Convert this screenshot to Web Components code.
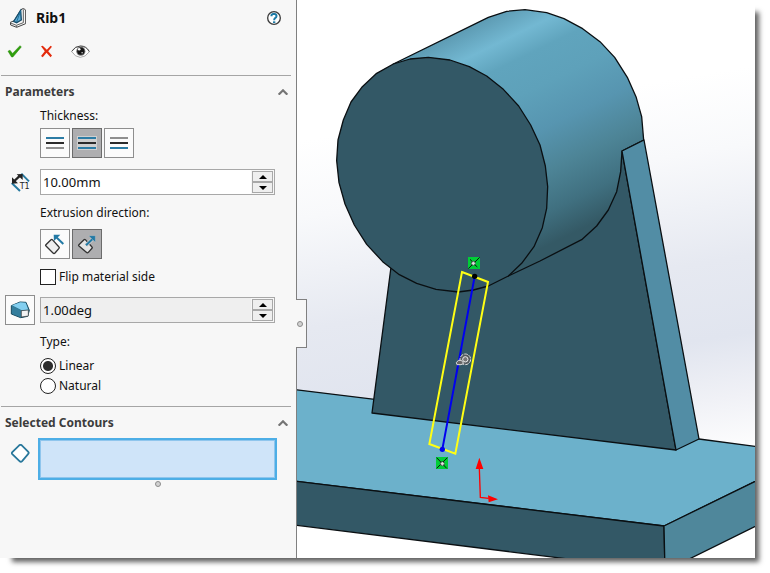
<!DOCTYPE html>
<html lang="en">
<head>
<meta charset="utf-8">
<title>Rib1</title>
<style>
html,body{margin:0;height:100%;background:#fff}
body{font:12px/16px "Noto Sans","Open Sans",sans-serif;color:#111}
</style>
</head>
<body>
<app-window>
  <property-panel slot="panel" name="Rib1">
    <panel-section heading="Parameters" inset="1">
      <panel-row space="4"><span>Thickness:</span></panel-row>
      <panel-row space="11">
        <icon-toggle label="First side" icon="first"></icon-toggle>
        <icon-toggle label="Both sides" icon="both" pressed></icon-toggle>
        <icon-toggle label="Second side" icon="second"></icon-toggle>
      </panel-row>
      <panel-row space="10">
        <svg-icon slot="lead" name="dimension"></svg-icon>
        <spin-field label="Rib thickness" value="10.00mm"></spin-field>
      </panel-row>
      <panel-row space="8"><span>Extrusion direction:</span></panel-row>
      <panel-row space="10">
        <icon-toggle label="Parallel to sketch" icon="parallel"></icon-toggle>
        <icon-toggle label="Normal to sketch" icon="normal" pressed></icon-toggle>
      </panel-row>
      <panel-row space="10"><choice-group kind="checkbox" options="Flip material side"></choice-group></panel-row>
      <panel-row space="9">
        <icon-toggle slot="lead" label="Draft on/off" icon="draft"></icon-toggle>
        <spin-field label="Draft angle" value="1.00deg" muted></spin-field>
      </panel-row>
      <panel-row space="8"><span>Type:</span></panel-row>
      <panel-row space="12"><choice-group kind="radio" options="Linear,Natural" selected="Linear"></choice-group></panel-row>
    </panel-section>
    <panel-section heading="Selected Contours" inset="0">
      <contour-list></contour-list>
    </panel-section>
  </property-panel>
  <model-view slot="view"></model-view>
</app-window>

<script>
const icons = {
  rib: ['30 25 48 60', 16, 20, '<path d="M62 31l8-5 7 5v41L50 83 32 76l-1-8 12-5 19-32z" fill="#f6f6f6" stroke="#444" stroke-width="3"/><path d="M70 29v40l-21 8-17-7M50 78v4" fill="none" stroke="#444" stroke-width="2.5"/><path d="M62 32L41 65l9 4 14-8z" fill="#5fadd6" stroke="#174f6d" stroke-width="4"/><path d="M62 34L50 66" stroke="#1c6f99" stroke-width="3"/>'],
  ok: ['20 134 44 40', 15, 13, '<path d="M22 153l6-3 8 10 23-24 4 4-26 31h-4z" fill="#2fa00c" stroke="#268508" stroke-width="1.5"/>'],
  cancel: ['124 136 38 38', 13, 13, '<path d="M127 140l5-2 12 12 11-12 4 3-11 13 11 13-4 5-12-13-11 13-5-4 11-14z" fill="#e32b0c"/>'],
  eye: ['212 130 58 46', 19, 15, '<path d="M214 153q11-16 27-16 18 0 27 17-12 17-28 17-16-1-26-18z" fill="#fff" stroke="#aaa" stroke-width="3"/><path d="M214 152q11-16 27-16 18 0 27 17" fill="none" stroke="#444" stroke-width="3"/><circle cx="242" cy="152" r="14" fill="#777"/><circle cx="242" cy="152" r="11" fill="#151515"/><circle cx="237" cy="146" r="4" fill="#fff"/><circle cx="246" cy="157" r="2.5" fill="#ccc"/>'],
  help: ['0 0 42 42', 14, 14, '<circle cx="21" cy="21" r="19" fill="#fff" stroke="#3c3c3c" stroke-width="4"/><path d="M13.500 16v-4q2-4 8-4 7 1 7 7 0 4-4 6-3 2-3 7" fill="none" stroke="#1e7ba6" stroke-width="6"/><path d="M18 31h7v5h-7z" fill="#1e7ba6"/>'],
  chevron: ['0 0 30 18', 10, 6, '<path d="M2 17L15 4l13 13" fill="none" stroke="#757575" stroke-width="6.5"/>'],
  first: ['0 0 18 14', 18, 14, '<path d="M0 1h18v2H0z" fill="#2c7ca5"/><path d="M0 6h18v2H0z" fill="#2b2b2b"/><path d="M0 11h18v2H0z" fill="#8f8f8f"/>'],
  both: ['-1 0 20 14', 20, 14, '<path d="M-1 0h20v14H-1z" fill="#cfcfcf"/><path d="M0 1h18v2H0zM0 11h18v2H0z" fill="#2c7ca5"/><path d="M0 6h18v2H0z" fill="#2b2b2b"/>'],
  second: ['0 0 18 14', 18, 14, '<path d="M0 1h18v2H0z" fill="#8f8f8f"/><path d="M0 6h18v2H0z" fill="#2b2b2b"/><path d="M0 11h18v2H0z" fill="#2c7ca5"/>'],
  dimension: ['32 213 57 60', 19, 20, '<path d="M63 218l23 23M34 246l25 24" stroke="#27799f" stroke-width="6"/><path d="M42 240l18-17" stroke="#222" stroke-width="7"/><path d="M35 248v-19l18 18zM67 219v18l-18-17z" fill="#222"/><text x="58" y="264" font-family="DejaVu Sans" font-size="24" fill="#222">T1</text>'],
  parallel: ['120 72 90 90', 30, 30, '<path d="M137 120l16-16q2-2 4 0l20 22q2 2 0 4l-12 14q-3 3-6 0l-21-21q-2-2-1-3z" fill="#eee" stroke="#333" stroke-width="4"/><path d="M190 117l-21-20" stroke="#237aa5" stroke-width="6"/><path d="M161 89h20l-19 19z" fill="#237aa5"/>'],
  normal: ['216 72 90 90', 30, 30, '<path d="M236 120l16-16q2-2 4 0l20 22q2 2 0 4l-11 12q-3 3-6 0l-22-19q-2-2-1-3z" fill="#e5e5e5" stroke="#333" stroke-width="4"/><path d="M258 121l20-19" stroke="#ccc" stroke-width="11"/><path d="M258 121l22-21" stroke="#237aa5" stroke-width="6"/><path d="M266 92h20v20z" fill="#237aa5" stroke="#ccc" stroke-width="1"/>'],
  draft: ['15 270 90 90', 30, 30, '<path d="M34 302l26-11 18 1 10 24-5 18-21 4-28-11z" fill="#2b7793" stroke="#194c62" stroke-width="3"/><path d="M36 301l25-9 16 1 8 21-20 2z" fill="#83cff0"/><path d="M36 303l27 13v21l-27-11z" fill="#347e9d"/><path d="M64 317l21-2v18l-21 3z" fill="#f3f3f3" stroke="#333" stroke-width="2"/>'],
  contour: ['32 530 56 58', 19, 19, '<path d="M35 555l21-21q4-3 8 0l19 19q4 4 0 8l-18 21q-4 4-8 0l-22-21q-3-3 0-6z" fill="#fff" stroke="#28779b" stroke-width="5.500"/>']
};
const svg = n => { const [v, w, h, body] = icons[n]; return `<svg viewBox="${v}" width="${w}" height="${h}" aria-hidden="true">${body}</svg>`; };
const base = '*{box-sizing:border-box}svg{display:block;flex:none}button,input,select{font:inherit;color:inherit;margin:0}';
const define = (tag, render) => customElements.define(tag, class extends HTMLElement {
  connectedCallback() {
    if (this.shadowRoot) return;
    this.attachShadow({ mode: 'open' }).innerHTML = `<style>${base}</style>` + render(this);
  }
});

define('svg-icon', e => `<style>:host{display:block}</style>${svg(e.getAttribute('name'))}`);

define('app-window', () => `<style>
:host{display:block;box-sizing:border-box;height:100vh;padding:0 15px 15px 0}
.win{display:flex;height:100%;box-shadow:8px 8px 5px -4px rgba(0,0,0,.62)}
slot[name=view]::slotted(*){flex:1;min-width:0}
</style><main class="win"><slot name="panel"></slot><slot name="view"></slot></main>`);

define('property-panel', e => `<style>
:host{display:block;position:relative;z-index:1;flex:none;box-sizing:border-box;width:297px;background:#f7f7f7;border-right:1px solid #808080}
header{height:75px;padding:8px 15px 0 7px}
.title,.actions{display:flex;align-items:center}
.title{height:20px;gap:10px;padding-left:3px}
h1{flex:1;margin:0;font-size:14px;line-height:20px;font-weight:700}
.actions{height:24px;margin-top:11px;gap:18px}
button{display:block;padding:0;border:0;background:none}
.tab{position:absolute;left:100%;top:299px;width:11px;height:49px;display:grid;place-items:center start;background:#f7f7f7;border:1px solid #808080;border-left:0}
.tab i{width:6px;height:6px;margin-left:1px;border:1px solid #8c8c8c;border-radius:50%;background:#d2d2d2}
</style>
<header><div class="title">${svg('rib')}<h1>${e.getAttribute('name')}</h1><button aria-label="Help">${svg('help')}</button></div>
<div class="actions"><button aria-label="OK">${svg('ok')}</button><button aria-label="Cancel">${svg('cancel')}</button><button aria-label="Preview">${svg('eye')}</button></div></header>
<slot></slot><button class="tab" aria-label="Resize panel"><i></i></button>`);

define('panel-section', e => `<style>
:host{display:block}
.bar{height:32px;margin:0 5px ${e.getAttribute('inset')}px 1px;padding:0 3px 0 4px;border-top:1px solid #a5a5a5;display:flex;align-items:center;justify-content:space-between}
h2{margin:0;font-size:12px;line-height:16px;font-weight:700;color:#3c3c3c}
button{display:block;padding:0;border:0;background:none}
</style><section><div class="bar"><h2>${e.getAttribute('heading')}</h2><button aria-label="Collapse ${e.getAttribute('heading')}" aria-expanded="true">${svg('chevron')}</button></div><slot></slot></section>`);

define('panel-row', e => `<style>
:host{display:grid;grid-template-columns:40px 1fr;align-items:center;padding-right:21px;margin-bottom:${e.getAttribute('space')}px}
.lead{display:flex;justify-content:center}
.body{display:flex;gap:2px;min-height:16px}
</style><div class="lead"><slot name="lead"></slot></div><div class="body"><slot></slot></div>`);

define('icon-toggle', e => `<style>
:host{display:block}
button{width:30px;height:30px;padding:0;display:grid;place-items:center;border:1px solid #8e8e8e;background:#fbfbfb;overflow:hidden}
button[aria-pressed=true]{background:#aeaeb0;border-color:#6b6b6b}
svg{margin:-1px}
</style><button aria-label="${e.getAttribute('label')}" aria-pressed="${e.hasAttribute('pressed')}">${svg(e.getAttribute('icon'))}</button>`);

define('spin-field', e => `<style>
:host{display:block;flex:1}
.box{display:flex;height:26px;border:1px solid #a8a8a8;background:#f7f7f7}
input{flex:1;min-width:0;height:24px;padding:0 2px;border:0;outline:0;font-size:13px;line-height:24px;background:${e.hasAttribute('muted') ? '#efefef' : '#fff'}}
.spin{display:grid;width:21px;margin:1px}
button{padding:0;display:grid;place-items:center;border:1px solid #a8a8a8;background:#efefef}
</style><div class="box"><input type="text" aria-label="${e.getAttribute('label')}" value="${e.getAttribute('value')}">
<div class="spin"><button aria-label="Increase"><svg width="8" height="4" viewBox="0 0 8 4"><path d="M0 4l4-4 4 4z"/></svg></button><button aria-label="Decrease"><svg width="8" height="4" viewBox="0 0 8 4"><path d="M0 0l4 4 4-4z"/></svg></button></div></div>`);

define('choice-group', e => `<style>
:host{display:grid;gap:4px}
label{display:flex;align-items:center;gap:3px;height:16px}
input{appearance:none;width:16px;height:16px;border:1px solid #222;background:#fff}
input[type=radio]{border-radius:50%}
input[type=radio]:checked{background:radial-gradient(circle,#2d2d2d 4.5px,#fff 5.5px)}
</style>${e.getAttribute('options').split(',').map(o => `<label><input type="${e.getAttribute('kind')}" name="choice"${o === e.getAttribute('selected') ? ' checked' : ''}><span>${o}</span></label>`).join('')}`);

define('contour-list', () => `<style>
:host{display:grid;grid-template-columns:38px 1fr;padding-right:19px}
.lead{display:flex;justify-content:center;padding:6px 0 0 2px}
select{display:block;width:100%;height:42px;border:2px solid #4daee6;border-radius:0;outline:0;background:#cfe4f9;box-shadow:inset 0 0 0 1px #8fc5ed;overflow:hidden}
i{grid-column:2;justify-self:center;width:6px;height:6px;margin-top:1px;border:1px solid #8c8c8c;border-radius:50%;background:#d2d2d2}
</style><div class="lead">${svg('contour')}</div><select size="2" aria-label="Selected contours"></select><i></i>`);

define('model-view', () => `<style>
:host{display:block;background:#fff;overflow:hidden}
svg{width:100%;height:100%}
</style><svg viewBox="297 0 458 558" preserveAspectRatio="xMinYMin slice" role="img" aria-label="Rib feature preview">
<defs>
<linearGradient id="sky" gradientUnits="userSpaceOnUse" x1="480" y1="0" x2="570" y2="540"><stop offset=".2" stop-color="#fff"/><stop offset=".34" stop-color="#f8f9fb"/><stop offset=".54" stop-color="#e6e9f1"/><stop offset=".68" stop-color="#e1e5ef"/><stop offset=".79" stop-color="#f0f1f6"/><stop offset=".9" stop-color="#fff"/></linearGradient>
<linearGradient id="tube" gradientUnits="userSpaceOnUse" x1="0" y1="0" x2="440" y2="900"><stop offset=".26" stop-color="#5b98b0"/><stop offset=".35" stop-color="#73b8d2"/><stop offset=".42" stop-color="#60a4bd"/><stop offset=".52" stop-color="#5ea1ba"/><stop offset=".64" stop-color="#5795b0"/><stop offset=".76" stop-color="#4d8496"/><stop offset=".87" stop-color="#407080"/><stop offset=".96" stop-color="#345965"/></linearGradient>
</defs>
<path d="M297 0h458v558H297z" fill="url(#sky)"/>
<g stroke="#0a0f12" stroke-width="1.3" stroke-linejoin="round">
<path d="M290 518L570 559H755V526L690 558.500H290z" fill="#fff" stroke="none"/>
<path d="M290 389L699 439 760 447V479L664 526 290 480.500z" fill="#6cb1cb"/>
<path d="M290 480.500L664 526 665 571 290 524.500z" fill="#335866"/>
<path d="M664 526L760 479V524L665 571z" fill="#4f879b"/>
<path d="M391 267L372 413 676 450 622 151 560 200z" fill="#335866"/>
</g>
<g transform="translate(320) scale(.33333)" stroke="#0a0f12" stroke-width="3.9" stroke-linejoin="round">
<path d="M220 192L505 52 560 34 615 29 680 38 732 56 788 86 840 125 884 172 922 232 948 290 965 350 971 420 906 453 902 515 890 575 865 630 830 678 785 719 660 783 565 828z" fill="url(#tube)"/>
<path d="M325 172L390 180 448 200 500 228 550 268 596 318 632 375 660 435 676 498 683 560 680 625 667 683 642 740 605 790 565 828 505 858 460 870 415 876 348 868 290 850 238 824 188 785 140 733 103 675 75 612 57 548 50 482 54 420 70 360 93 306 127 260 170 220 220 192 270 177z" fill="#335866"/>
</g>
<path d="M622 151L644 140 699 439 676 450z" fill="#528da5" stroke="#0a0f12" stroke-width="1.3" stroke-linejoin="round"/>
<g transform="translate(360 250) scale(.33333)" fill="none">
<path d="M306 66L384 96 286 611 208 582z" stroke="#ffff14" stroke-width="6"/>
<path d="M344 79L247 598" stroke="#0000f0" stroke-width="6"/>
<circle cx="344" cy="79" r="8" fill="#000"/><circle cx="247" cy="598" r="8" fill="#0000f0"/>
<path d="M324 21h36v36h-36zM228 621h36v36h-36z" fill="#00ce36"/>
<g stroke="#111" stroke-width="3"><path d="M325 56L359 22M330 28l7 7M344 44l8 7M230 623l30 32M262 623l-32 32"/></g>
<g fill="#bbb" stroke="#222" stroke-width="2"><circle cx="340" cy="40" r="6"/><circle cx="247" cy="641" r="6"/></g>
<path d="M335 40h11M340 35v11M242 641h11M247 636v11" stroke="#eee" stroke-width="2"/>
<circle cx="316" cy="328" r="16" fill="#555b5e" stroke="#ddd" stroke-width="3" stroke-dasharray="11 3"/><circle cx="316" cy="328" r="8" fill="#777" stroke="#eee" stroke-width="3"/>
<path d="M289 338l6-7h9l7 9-8 4h-12z" fill="#666" stroke="#ddd" stroke-width="3"/>
<path d="M358 655L361 742 386 745" stroke="#f00" stroke-width="4"/>
<path d="M358 623L370 657H347zM414 748L384 736 386 757z" fill="#f00"/>
</g></svg>`);
</script>
</body>
</html>
